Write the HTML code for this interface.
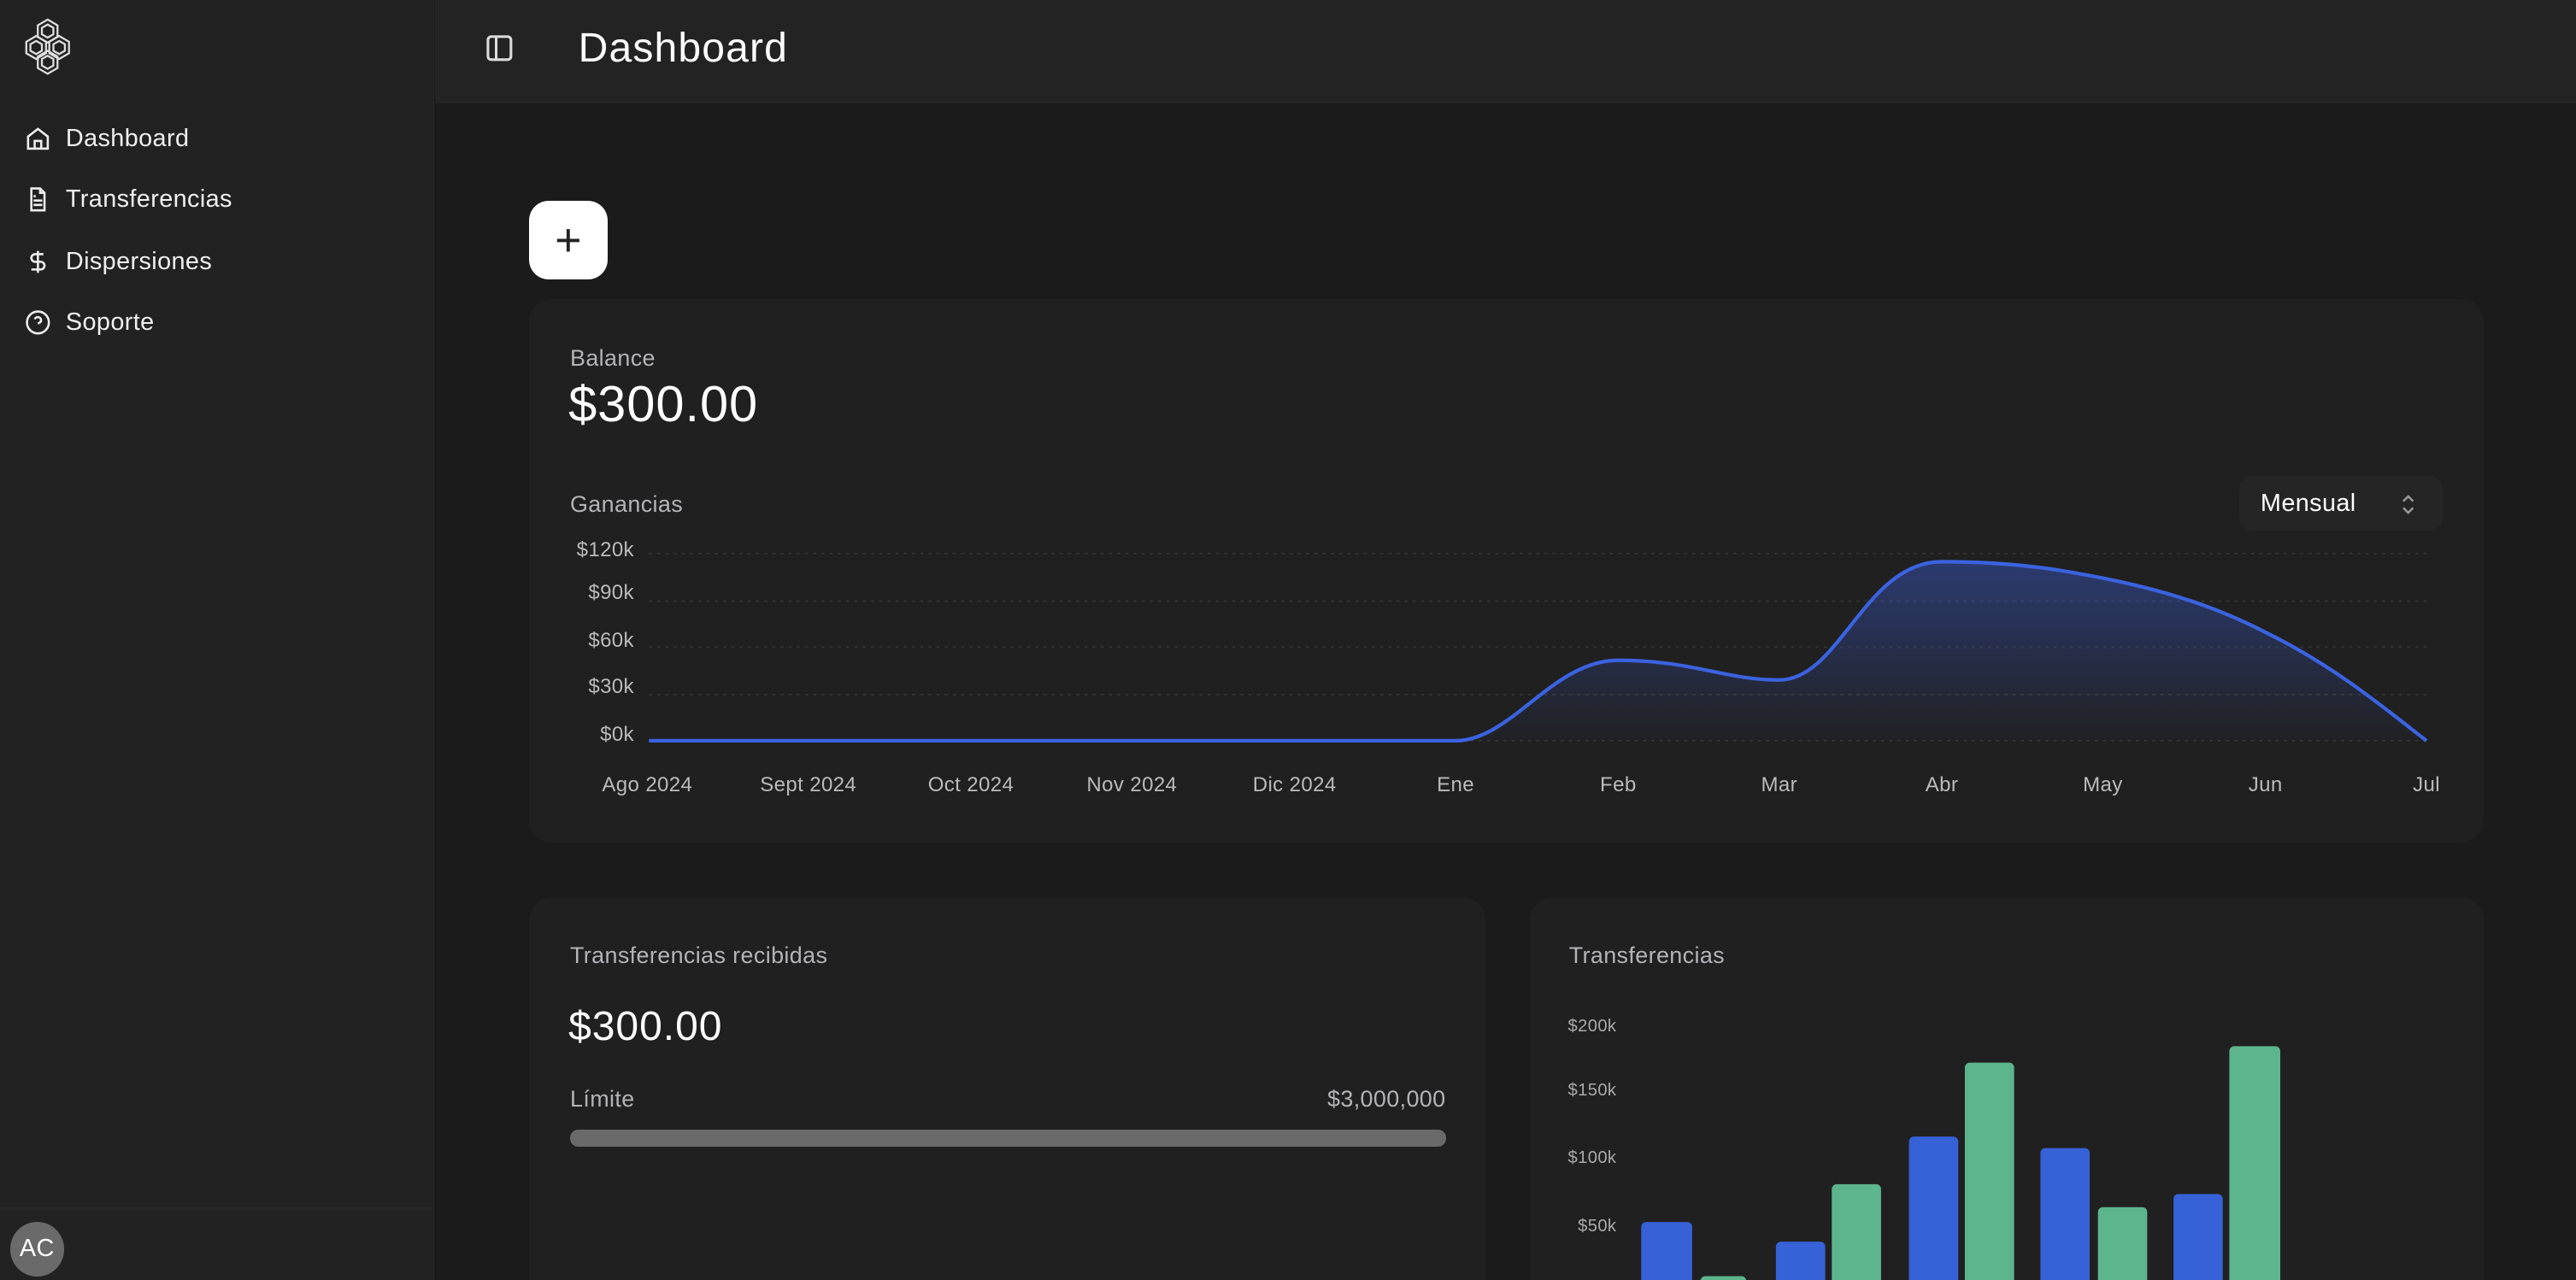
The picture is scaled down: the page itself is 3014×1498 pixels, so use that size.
<!DOCTYPE html>
<html><head><meta charset="utf-8"><style>
html,body{margin:0;padding:0;background:#1b1b1b;width:3014px;height:1498px;overflow:hidden}
#w{zoom:1.92219;width:1568px;height:780px;position:relative;font-family:"Liberation Sans",sans-serif;color:#eee;letter-spacing:.2px}
.a{position:absolute}
.side{left:0;top:0;width:264px;height:780px;background:#222;border-right:1px solid #262626}
.nav{left:15px;font-size:15px;color:#f0f0f0;display:flex;align-items:center;gap:9px}
.nav svg{width:16px;height:16px}
.card{background:#202020;border-radius:14px}
.lbl{color:#b4b4b8;font-size:14px}
.ax{color:#bbb;font-size:12.5px}
.bx{color:#aaa;font-size:10.5px}
</style></head><body><div id="w">
<div class="a side"></div>
<svg class="a" style="left:13px;top:11px" width="32" height="35" viewBox="0 0 32 35" fill="none" stroke="#ddd" stroke-width="1.2">
<path d="M16 1l6 3.5v7L16 15l-6-3.5v-7z"/><path d="M9 11l6 3.5v7L9 25l-6-3.5v-7z"/><path d="M23 11l6 3.5v7L23 25l-6-3.5v-7z"/><path d="M16 20l6 3.5v7L16 34l-6-3.5v-7z"/>
<path d="M16 4l3.5 2v4L16 12l-3.5-2V6z"/><path d="M9 14l3.5 2v4L9 22l-3.5-2v-4z"/><path d="M23 14l3.5 2v4L23 22l-3.5-2v-4z"/><path d="M16 23l3.5 2v4L16 31l-3.5-2v-4z"/></svg>
<div class="a nav" style="top:76px"><svg viewBox="0 0 24 24" fill="none" stroke="#eee" stroke-width="2"><path d="M3 10l9-7 9 7v11H3z"/><path d="M9 21v-7h6v7"/></svg>Dashboard</div>
<div class="a nav" style="top:113px"><svg viewBox="0 0 24 24" fill="none" stroke="#eee" stroke-width="2"><path d="M14 2H6v20h12V6z"/><path d="M14 2v4h4M8 13h8M8 17h8M8 9h2"/></svg>Transferencias</div>
<div class="a nav" style="top:151px"><svg viewBox="0 0 24 24" fill="none" stroke="#eee" stroke-width="2"><path d="M12 2v20M17 5H9.5a3.5 3.5 0 000 7h5a3.5 3.5 0 010 7H6"/></svg>Dispersiones</div>
<div class="a nav" style="top:188px"><svg viewBox="0 0 24 24" fill="none" stroke="#eee" stroke-width="2"><circle cx="12" cy="12" r="10"/><path d="M9.1 9a3 3 0 015.8 1c0 2-3 3-3 3M12 17h.01"/></svg>Soporte</div>
<div class="a" style="left:0;top:735px;width:264px;height:1px;background:#272727"></div>
<div class="a" style="left:6px;top:744px;width:33px;height:33px;border-radius:50%;background:#6a6a6a;color:#fff;font-size:15px;display:flex;align-items:center;justify-content:center">AC</div>
<div class="a" style="left:265px;top:0;width:1303px;height:63px;background:#232323"></div>
<svg class="a" style="left:296px;top:21px" width="16" height="17" viewBox="0 0 16 17" fill="none" stroke="#ddd" stroke-width="1.6"><rect x="1" y="1.5" width="14" height="14" rx="2"/><path d="M6 1.5v14"/></svg>
<div class="a" style="left:352px;top:15px;font-size:25px;color:#fff;letter-spacing:.6px">Dashboard</div>
<div class="a" style="left:322px;top:122px;width:48px;height:48px;border-radius:12px;background:#fff;color:#222;font-size:28px;display:flex;align-items:center;justify-content:center;font-weight:300">+</div>
<div class="a card" style="left:322px;top:182px;width:1190px;height:331px"></div>
<div class="a lbl" style="left:347px;top:210px">Balance</div>
<div class="a" style="left:346px;top:228px;font-size:31px;color:#fff;letter-spacing:.5px">$300.00</div>
<div class="a lbl" style="left:347px;top:299px">Ganancias</div>
<div class="a" style="left:1363px;top:290px;width:124px;height:33px;border-radius:8px;background:#252525;font-size:15px;color:#fff;box-sizing:border-box;padding:8px 13px">Mensual<svg style="position:absolute;right:17px;top:10px" width="8" height="14" viewBox="0 0 8 14" fill="none" stroke="#999" stroke-width="1.3"><path d="M1 5l3-3 3 3M1 9l3 3 3-3"/></svg></div>
<svg class="a" style="left:0;top:0" width="1568" height="780">
<defs><linearGradient id="g" x1="0" y1="0" x2="0" y2="1"><stop offset="0" stop-color="#3a5bd0" stop-opacity=".45"/><stop offset="1" stop-color="#3a5bd0" stop-opacity=".02"/></linearGradient></defs>
<g stroke="#333" stroke-dasharray="2 3" stroke-width="1">
<path d="M395 337H1480M395 366H1480M395 394H1480M395 423H1480M395 451H1480"/>
<path d="M1000 622H1487M1000 662H1487M1000 702H1487M1000 742H1487"/></g>
<path d="M395 451H886C920 451 945 402 985 402C1030 402 1050 414 1083 414C1120 414 1135 342 1182 342C1230 342 1260 348 1280 352C1320 360 1350 370 1379 385C1420 405 1450 430 1477 451Z" fill="url(#g)"/>
<path d="M395 451H886C920 451 945 402 985 402C1030 402 1050 414 1083 414C1120 414 1135 342 1182 342C1230 342 1260 348 1280 352C1320 360 1350 370 1379 385C1420 405 1450 430 1477 451" fill="none" stroke="#3b63e0" stroke-width="2.2"/>
</svg>
<div class="a ax" style="left:330px;top:328px;width:56px;text-align:right">$120k</div>
<div class="a ax" style="left:330px;top:354px;width:56px;text-align:right">$90k</div>
<div class="a ax" style="left:330px;top:383px;width:56px;text-align:right">$60k</div>
<div class="a ax" style="left:330px;top:411px;width:56px;text-align:right">$30k</div>
<div class="a ax" style="left:330px;top:440px;width:56px;text-align:right">$0k</div>
<div class="a ax" style="left:344px;top:471px;width:1190px;height:16px">
<span class="a" style="left:50px;transform:translateX(-50%);white-space:nowrap">Ago 2024</span><span class="a" style="left:148px;transform:translateX(-50%);white-space:nowrap">Sept 2024</span><span class="a" style="left:247px;transform:translateX(-50%);white-space:nowrap">Oct 2024</span><span class="a" style="left:345px;transform:translateX(-50%);white-space:nowrap">Nov 2024</span><span class="a" style="left:444px;transform:translateX(-50%);white-space:nowrap">Dic 2024</span><span class="a" style="left:542px;transform:translateX(-50%)">Ene</span><span class="a" style="left:641px;transform:translateX(-50%)">Feb</span><span class="a" style="left:739px;transform:translateX(-50%)">Mar</span><span class="a" style="left:838px;transform:translateX(-50%)">Abr</span><span class="a" style="left:936px;transform:translateX(-50%)">May</span><span class="a" style="left:1035px;transform:translateX(-50%)">Jun</span><span class="a" style="left:1133px;transform:translateX(-50%)">Jul</span></div>
<div class="a card" style="left:322px;top:546px;width:582px;height:260px"></div>
<div class="a lbl" style="left:347px;top:574px">Transferencias recibidas</div>
<div class="a" style="left:346px;top:611px;font-size:25px;color:#fff;letter-spacing:.5px">$300.00</div>
<div class="a lbl" style="left:347px;top:661px">Límite</div>
<div class="a lbl" style="left:780px;top:661px;width:100px;text-align:right">$3,000,000</div>
<div class="a" style="left:347px;top:688px;width:533px;height:10px;border-radius:5px;background:#6a6a6a"></div>
<div class="a card" style="left:931px;top:546px;width:581px;height:260px"></div>
<div class="a lbl" style="left:955px;top:574px">Transferencias</div>
<div class="a bx" style="left:940px;top:619px;width:44px;text-align:right">$200k</div>
<div class="a bx" style="left:940px;top:658px;width:44px;text-align:right">$150k</div>
<div class="a bx" style="left:940px;top:699px;width:44px;text-align:right">$100k</div>
<div class="a bx" style="left:940px;top:741px;width:44px;text-align:right">$50k</div>
<svg class="a" style="left:0;top:0" width="1568" height="780">
<g fill="#3761d6"><rect x="999" y="744" width="31" height="60" rx="3"/><rect x="1081" y="756" width="30" height="50" rx="3"/><rect x="1162" y="692" width="30" height="110" rx="3"/><rect x="1242" y="699" width="30" height="100" rx="3"/><rect x="1323" y="727" width="30" height="80" rx="3"/></g>
<g fill="#5db58e"><rect x="1035" y="777" width="28" height="20" rx="3"/><rect x="1115" y="721" width="30" height="80" rx="3"/><rect x="1196" y="647" width="30" height="150" rx="3"/><rect x="1277" y="735" width="30" height="60" rx="3"/><rect x="1357" y="637" width="31" height="160" rx="3"/></g>
</svg>
</div></body></html>
